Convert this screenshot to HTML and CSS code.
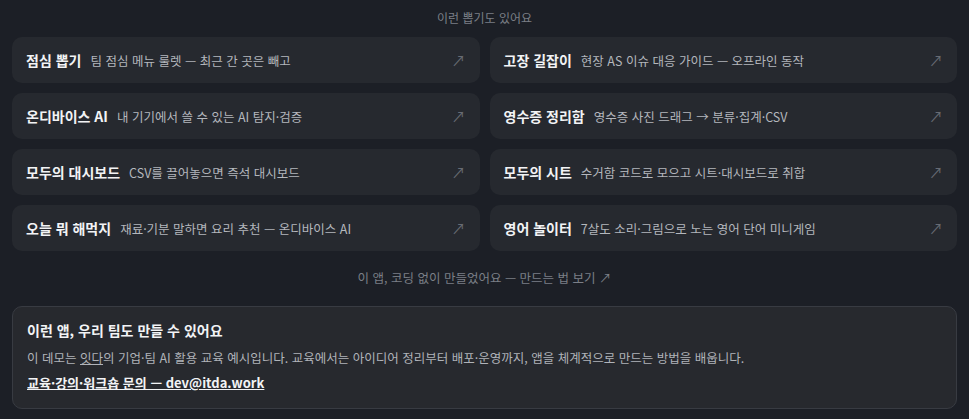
FILE: index.html
```html
<!DOCTYPE html>
<html lang="ko">
<head>
    <meta charset="UTF-8">
    <title>잇다 - 더 많은 앱</title>
    <link rel="stylesheet" href="styles.css">
</head>
<body>
    <div class="more">
        <p class="more-title">이런 뽑기도 있어요</p>

        <!-- 다른 데모 앱 목록 -->
        <div class="app-grid">
            <a class="app-card" href="#">
                <span class="app-name">점심 뽑기</span>
                <span class="app-desc">팀 점심 메뉴 룰렛 — 최근 간 곳은 빼고</span>
                <span class="app-go">↗</span>
            </a>
            <a class="app-card" href="#">
                <span class="app-name">고장 길잡이</span>
                <span class="app-desc">현장 AS 이슈 대응 가이드 — 오프라인 동작</span>
                <span class="app-go">↗</span>
            </a>
            <a class="app-card" href="#">
                <span class="app-name">온디바이스 AI</span>
                <span class="app-desc">내 기기에서 쓸 수 있는 AI 탐지·검증</span>
                <span class="app-go">↗</span>
            </a>
            <a class="app-card" href="#">
                <span class="app-name">영수증 정리함</span>
                <span class="app-desc">영수증 사진 드래그 → 분류·집계·CSV</span>
                <span class="app-go">↗</span>
            </a>
            <a class="app-card" href="#">
                <span class="app-name">모두의 대시보드</span>
                <span class="app-desc">CSV를 끌어놓으면 즉석 대시보드</span>
                <span class="app-go">↗</span>
            </a>
            <a class="app-card" href="#">
                <span class="app-name">모두의 시트</span>
                <span class="app-desc">수거함 코드로 모으고 시트·대시보드로 취합</span>
                <span class="app-go">↗</span>
            </a>
            <a class="app-card" href="#">
                <span class="app-name">오늘 뭐 해먹지</span>
                <span class="app-desc">재료·기분 말하면 요리 추천 — 온디바이스 AI</span>
                <span class="app-go">↗</span>
            </a>
            <a class="app-card" href="#">
                <span class="app-name">영어 놀이터</span>
                <span class="app-desc">7살도 소리·그림으로 노는 영어 단어 미니게임</span>
                <span class="app-go">↗</span>
            </a>
        </div>

        <a class="howto" href="#">이 앱, 코딩 없이 만들었어요 — 만드는 법 보기 ↗</a>
    </div>

    <!-- 교육 안내 -->
    <div class="edu">
        <h2 class="edu-title">이런 앱, 우리 팀도 만들 수 있어요</h2>
        <p class="edu-text">이 데모는 <a href="#">잇다</a>의 기업·팀 AI 활용 교육 예시입니다. 교육에서는 아이디어 정리부터 배포·운영까지, 앱을 체계적으로 만드는 방법을 배웁니다.</p>
        <a class="edu-contact" href="mailto:dev@itda.work">교육·강의·워크숍 문의 — dev@itda.work</a>
    </div>
</body>
</html>
```

FILE: styles.css
```css
/* 기본 */
body {
    margin: 0;
    padding: 0 12px;
    background: #1c1f26;
    color: #e8e9eb;
    font-family: "Noto Sans CJK KR", "Noto Sans", sans-serif;
}

a {
    color: inherit;
    text-decoration: none;
}

/* 다른 앱 목록 */
.more {
    padding-top: 9px;
}

.more-title {
    margin: 0 0 10px;
    text-align: center;
    font-size: 12px;
    line-height: 18px;
    color: #7b7f87;
}

.app-grid {
    display: grid;
    grid-template-columns: 1fr 1fr;
    gap: 10px;
}

.app-card {
    display: flex;
    align-items: center;
    gap: 9px;
    height: 46px;
    padding: 0 14px;
    background: #26292f;
    border-radius: 10px;
}

.app-name {
    font-size: 14px;
    font-weight: 700;
    color: #f2f3f5;
    white-space: nowrap;
}

.app-desc {
    flex: 1;
    font-size: 12.5px;
    color: #b4b7bd;
    white-space: nowrap;
}

.app-go {
    font-size: 14px;
    color: #676b73;
}

.howto {
    display: block;
    margin: 18px 0 0;
    text-align: center;
    font-size: 12.5px;
    line-height: 18px;
    color: #7b7f87;
}

/* 교육 안내 박스 */
.edu {
    margin-top: 19px;
    padding: 12px 14px 15px;
    background: #27292e;
    border: 1px solid #383b42;
    border-radius: 10px;
}

.edu-title {
    margin: 0 0 7px;
    font-size: 14px;
    font-weight: 700;
    line-height: 22px;
    color: #f2f3f5;
}

.edu-text {
    margin: 0 0 5px;
    font-size: 12.5px;
    line-height: 20px;
    color: #b0b3b9;
}

.edu-text a {
    text-decoration: underline;
}

.edu-contact {
    display: block;
    font-size: 13px;
    font-weight: 700;
    line-height: 20px;
    color: #f2f3f5;
    text-decoration: underline;
}
```
